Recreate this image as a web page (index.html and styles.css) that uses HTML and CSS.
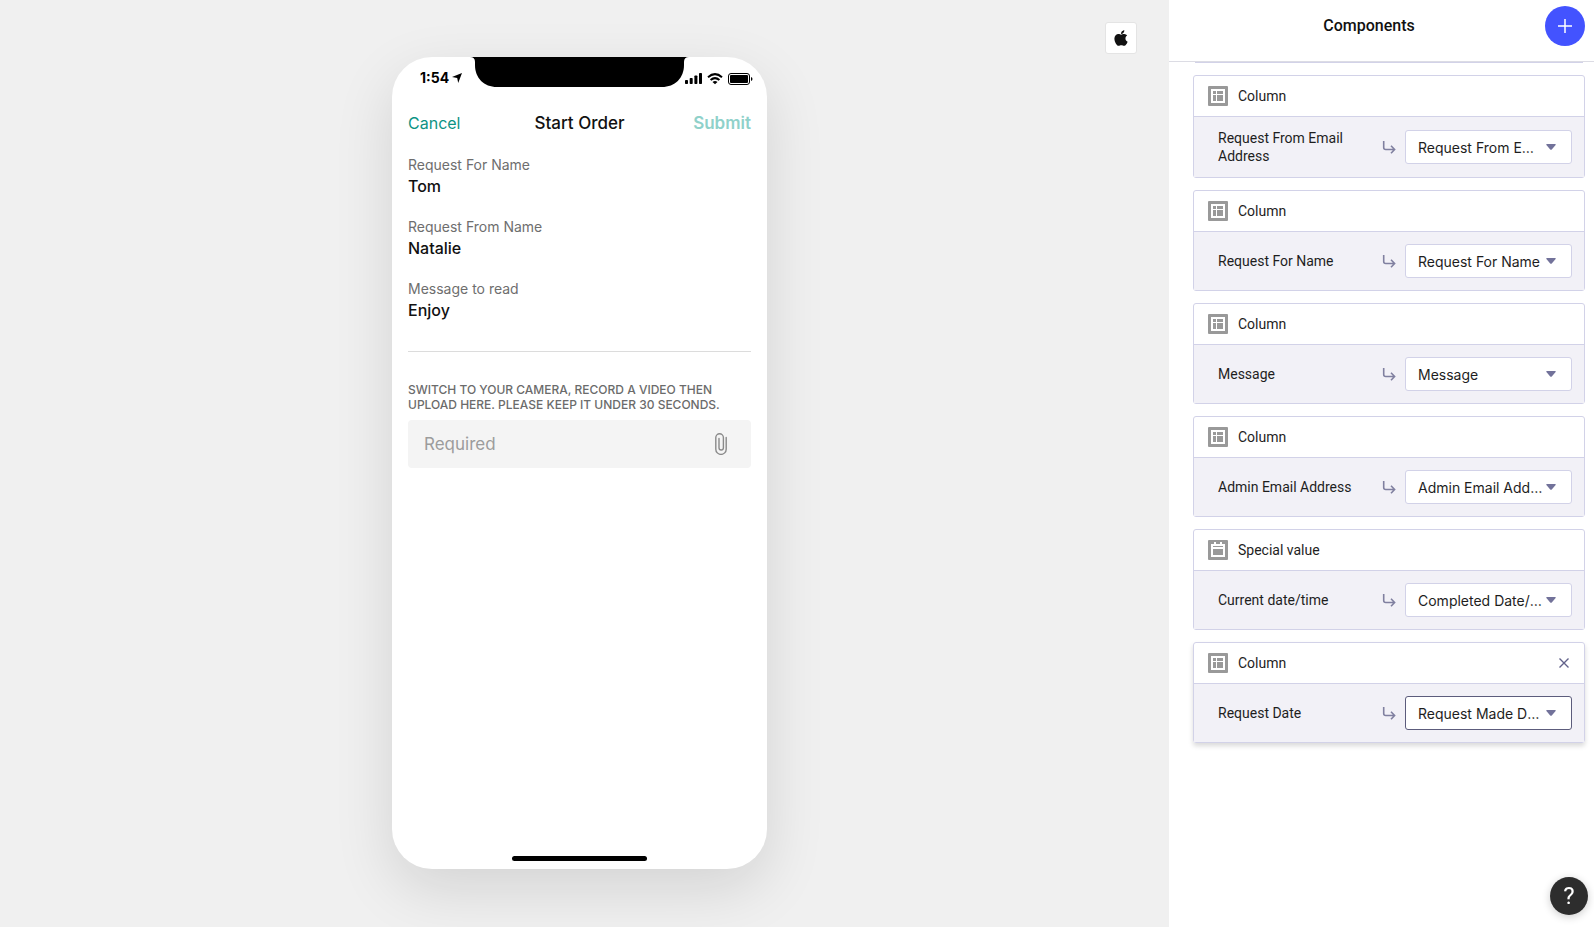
FILE: index.html
```html
<!DOCTYPE html>
<html lang="en">
<head>
<meta charset="utf-8">
<title>Components</title>
<link rel="stylesheet" href="styles.css">
</head>
<body>
<svg class="defs" aria-hidden="true">
  <symbol id="i-column" viewBox="0 0 20 20">
    <rect width="20" height="20" rx="1" fill="#999"/>
    <path fill="#fff" d="M3 3h14v14H3z"/>
    <path fill="#999" d="M5 5h3v3H5zM9 5h6v3H9zM5 9h3v6H5zM9 9h6v6H9z"/>
  </symbol>
  <symbol id="i-calendar" viewBox="0 0 20 20">
    <rect width="20" height="20" rx="1" fill="#999"/>
    <path fill="#fff" d="M6 2h2v2h4V2h2v2h3v13H3V4h3z"/>
    <path fill="#999" d="M5 6h10v1H5zM5 9h10v6H5z"/>
  </symbol>
  <symbol id="i-map" viewBox="0 0 14 14">
    <path d="M1.700 1v6.500q0 2 2 2h8.500M9 5.800l3.600 3.700L9 13.200" fill="none" stroke="#8080a0" stroke-width="1.600"/>
  </symbol>
  <symbol id="i-caret" viewBox="0 0 10 6">
    <path d="M1 0h8q1.300 0 .6 1L5.800 5.400q-.8.800-1.600 0L.4 1Q-.3 0 1 0z" fill="#72729a"/>
  </symbol>
</svg>
<div class="app">
  <main class="preview">
    <button class="platform" aria-label="iOS">
      <svg viewBox="0 0 384 512" width="14" height="18"><path fill="#111" d="M318.700 268.700c-.2-36.700 16.400-64.400 50-84.800-18.800-26.900-47.200-41.700-84.700-44.600-35.500-2.800-74.300 20.700-88.500 20.700-15 0-49.400-19.700-76.400-19.700C63.300 141.200 4 184.800 4 273.500q0 39.300 14.400 81.200c12.800 36.700 59 126.700 107.200 125.200 25.200-.6 43-17.900 75.800-17.900 31.800 0 48.300 17.900 76.400 17.900 48.600-.7 90.400-82.500 102.600-119.300-65.200-30.700-61.700-90-61.700-91.900zm-56.600-164.200c27.300-32.400 24.800-61.900 24-72.500-24.100 1.400-52 16.400-67.900 34.900-17.500 19.800-27.800 44.300-25.600 71.900 26.100 2 49.900-11.400 69.500-34.300z"/></svg>
    </button>
    <section class="phone">
      <div class="status">
        <span class="time">1:54
          <svg viewBox="0 0 10 10" width="10" height="10"><path d="M10 0 6.200 10 5.200 4.900 0 3.900z"/></svg>
        </span>
        <svg class="notch" viewBox="0 0 219 30" width="219" height="30"><path d="M0 0h219q-5 0-5 5v3c0 13-9 22-22 22H27C14 30 5 21 5 8V5Q5 0 0 0z"/></svg>
        <span class="signals">
          <svg viewBox="0 0 17 12" width="17" height="12"><rect y="7" width="3" height="4" rx=".8"/><rect x="4.700" y="5" width="3" height="6" rx=".8"/><rect x="9.400" y="2.500" width="3" height="8.500" rx=".8"/><rect x="14" width="3" height="11" rx=".8"/></svg>
          <svg viewBox="0 0 16 12" width="16" height="12"><g fill="none" stroke="#000" stroke-width="2"><path d="M1 4.300Q8-2 15 4.300"/><path d="M3.600 7q4.400-3.800 8.800 0"/></g><path d="M8 11.300 5.500 8.900q2.500-2 5 0z"/></svg>
          <svg viewBox="0 0 25 12" width="25" height="12"><rect x=".5" y=".5" width="21" height="11" rx="2.500" fill="none" stroke="#000"/><rect x="2" y="2" width="18" height="8" rx="1"/><path d="M23 4q1.500.5 1.500 2T23 8z"/></svg>
        </span>
      </div>
      <header class="nav">
        <button class="cancel">Cancel</button>
        <h2>Start Order</h2>
        <button class="submit" disabled>Submit</button>
      </header>
      <div class="screen">
        <dl class="facts">
          <div><dt>Request For Name</dt><dd>Tom</dd></div>
          <div><dt>Request From Name</dt><dd>Natalie</dd></div>
          <div><dt>Message to read</dt><dd>Enjoy</dd></div>
        </dl>
        <hr>
        <label class="caption" for="upload">Switch to your camera, record a video then upload here. Please keep it under 30 seconds.</label>
        <div class="field">
          <input id="upload" type="text" placeholder="Required">
          <svg viewBox="0 0 12 22" width="12" height="22"><path d="M11.200 4.500v11.700a5.200 5.200 0 0 1-10.400 0V4.600a3.800 3.800 0 0 1 7.600 0v10.200a2.200 2.200 0 0 1-4.400 0V5.500" fill="none" stroke="#8a8a8a" stroke-width="1.400" stroke-linecap="round"/></svg>
        </div>
      </div>
      <div class="home"></div>
    </section>
  </main>
  <aside class="panel">
    <header class="panel-head">
      <h1>Components</h1>
      <button class="add" aria-label="Add"><svg viewBox="0 0 14 14" width="14" height="14"><path d="M7 0v14M0 7h14" stroke="#fff" stroke-width="1.500"/></svg></button>
    </header>
    <div class="list">
      <div class="card-tail"></div>
      <section class="card">
        <h3><svg class="kind"><use href="#i-column"/></svg>Column</h3>
        <div class="row"><label for="s1">Request From Email Address</label><svg class="map"><use href="#i-map"/></svg>
          <span class="pick"><select id="s1"><option>Request From Email Address</option></select><svg class="caret"><use href="#i-caret"/></svg></span></div>
      </section>
      <section class="card">
        <h3><svg class="kind"><use href="#i-column"/></svg>Column</h3>
        <div class="row"><label for="s2">Request For Name</label><svg class="map"><use href="#i-map"/></svg>
          <span class="pick"><select id="s2"><option>Request For Name</option></select><svg class="caret"><use href="#i-caret"/></svg></span></div>
      </section>
      <section class="card">
        <h3><svg class="kind"><use href="#i-column"/></svg>Column</h3>
        <div class="row"><label for="s3">Message</label><svg class="map"><use href="#i-map"/></svg>
          <span class="pick"><select id="s3"><option>Message</option></select><svg class="caret"><use href="#i-caret"/></svg></span></div>
      </section>
      <section class="card">
        <h3><svg class="kind"><use href="#i-column"/></svg>Column</h3>
        <div class="row"><label for="s4">Admin Email Address</label><svg class="map"><use href="#i-map"/></svg>
          <span class="pick"><select id="s4"><option>Admin Email Address</option></select><svg class="caret"><use href="#i-caret"/></svg></span></div>
      </section>
      <section class="card">
        <h3><svg class="kind"><use href="#i-calendar"/></svg>Special value</h3>
        <div class="row"><label for="s5">Current date/time</label><svg class="map"><use href="#i-map"/></svg>
          <span class="pick"><select id="s5"><option>Completed Date/Time</option></select><svg class="caret"><use href="#i-caret"/></svg></span></div>
      </section>
      <section class="card active">
        <h3><svg class="kind"><use href="#i-column"/></svg>Column
          <button class="close" aria-label="Remove"><svg viewBox="0 0 10 10" width="10" height="10"><path d="m.5.5 9 9m0-9-9 9" stroke="#62628a" stroke-width="1.400"/></svg></button></h3>
        <div class="row"><label for="s6">Request Date</label><svg class="map"><use href="#i-map"/></svg>
          <span class="pick"><select id="s6"><option>Request Made Date</option></select><svg class="caret"><use href="#i-caret"/></svg></span></div>
      </section>
    </div>
  </aside>
</div>
<button class="help" aria-label="Help">?</button>
</body>
</html>
```
FILE: styles.css
```css
* { box-sizing: border-box; margin: 0; }
body { font-family: Roboto, sans-serif; font-size: 14px; color: #1e1e1e; background: #f0f0f0; }
button { padding: 0; border: 0; background: none; font: inherit; color: inherit; }
svg { flex: none; display: block; }
.defs { position: absolute; width: 0; height: 0; }
.app { display: flex; height: 100vh; overflow: hidden; }

.preview { flex: 1; position: relative; display: flex; align-items: center; justify-content: center; padding: 0 10px 1px 0; }
.platform { position: absolute; top: 22px; right: 32px; width: 32px; height: 32px; display: grid; place-items: center; background: #fff; border: 1px solid #e4e4e4; border-radius: 3px; }

.phone { width: 375px; min-height: 812px; display: flex; flex-direction: column; background: #fff; border-radius: 40px; box-shadow: 0 20px 60px rgba(0, 0, 0, 0.12); font-family: Inter, sans-serif; }
.status { height: 44px; display: grid; grid-template-columns: minmax(0, 1fr) auto minmax(0, 1fr); align-items: start; }
.time { display: flex; align-items: center; gap: 3px; padding: 12px 0 0 28px; font-size: 14px; line-height: 18px; font-weight: 700; color: #000; }
.signals { display: flex; justify-content: flex-end; gap: 5px; padding: 16px 14px 0 0; }
.nav { height: 44px; display: grid; grid-template-columns: 1fr auto 1fr; align-items: center; padding: 0 16px; font-size: 17px; }
.nav h2 { font-size: 17px; font-weight: 500; color: #111; }
.cancel { justify-self: start; font-size: 16px; color: #0d9384; }
.submit { justify-self: end; font-weight: 600; color: #8fd1ca; }
.screen { flex: 1; padding: 11px 16px 0; }
.facts { display: grid; gap: 20px; }
.facts dt { line-height: 18px; color: #6e6e6e; }
.facts dd { font-size: 16px; line-height: 24px; font-weight: 500; color: #111; }
hr { border: 0; border-top: 1px solid #dcdcdc; margin: 29px 0 30px; }
.caption { display: block; font-size: 12px; line-height: 15px; font-weight: 500; text-transform: uppercase; color: #6b6b6b; }
.field { display: flex; align-items: center; height: 48px; margin-top: 8px; padding: 0 24px 0 16px; background: #f4f4f4; border-radius: 4px; }
.field input { flex: 1; min-width: 0; padding: 0; border: 0; outline: 0; background: none; font: 17px Inter, sans-serif; }
.field input::placeholder { color: #9c9c9c; }
.home { align-self: center; width: 135px; height: 5px; margin-bottom: 8px; border-radius: 3px; background: #000; }

.panel { width: 425px; display: flex; flex-direction: column; background: #fff; }
.panel-head { display: flex; align-items: center; padding: 6px 9px 15px 24px; border-bottom: 1px solid #dcdce4; }
.panel-head h1 { flex: 1; padding-bottom: 2px; text-align: center; font-size: 16px; font-weight: 500; color: #111; }
.add { width: 40px; height: 40px; display: grid; place-items: center; border-radius: 50%; background: #4353ff; }
.list { flex: 1; overflow: hidden; display: flex; flex-direction: column; gap: 12px; padding: 0 9px 0 24px; }
.card-tail { height: 1px; margin: 0 2px; background: #d2d2e8; flex: none; }
.card { border: 1px solid #d2d2e8; border-radius: 3px; }
.card.active { box-shadow: 0 3px 5px rgba(0, 0, 0, 0.15); }
.card h3 { height: 40px; display: flex; align-items: center; gap: 10px; padding: 0 15px 0 14px; font-size: 14px; font-weight: 400; }
.kind { width: 20px; height: 20px; }
.close { margin-left: auto; }
.row { display: flex; align-items: center; padding: 12px 12px 12px 24px; border-top: 1px solid #d2d2e8; background: #f2f1f7; }
.row label { flex: 1; padding-right: 20px; line-height: 18px; }
.map { width: 14px; height: 14px; margin-right: 9px; }
.pick { position: relative; width: 167px; }
.pick select { appearance: none; display: block; width: 100%; height: 34px; padding: 1px 27px 0 12px; border: 1px solid #d2d2e8; border-radius: 3px; background: #fff; color: #1e1e1e; font: 14px Inter, sans-serif; text-overflow: ellipsis; }
.active .pick select { border-color: #5c5c7c; }
.caret { position: absolute; right: 16px; top: 14px; width: 10px; height: 6px; pointer-events: none; }

.help { position: fixed; right: 6px; bottom: 12px; width: 38px; height: 38px; border-radius: 50%; background: #2d2d2d; color: #fff; font-size: 24px; box-shadow: 0 2px 8px rgba(0, 0, 0, 0.2); }
```
